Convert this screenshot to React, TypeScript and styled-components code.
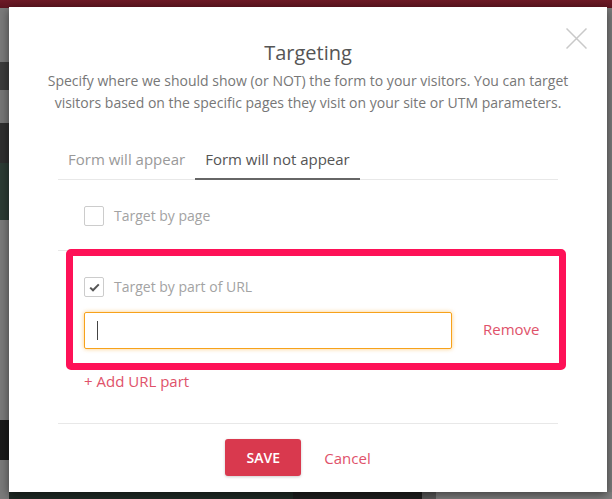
import React from "react";
import styled, { createGlobalStyle } from "styled-components";

const GlobalStyle = createGlobalStyle`
    body {
        margin: 0;
        font-family: "Open Sans", "Liberation Sans", sans-serif;
    }
`
const Page = styled.div`
    width: 612px;
    height: 499px;
    overflow: hidden;
    box-sizing: border-box;
    padding: 7px 5px 0 9px;
    background:
        linear-gradient(#6d1b27, #5e1520) 0 0 / 100% 8px no-repeat,
        linear-gradient(to bottom,
            #7a7a7a 0px, #7a7a7a 62px, #3c3c3c 62px, #3c3c3c 90px,
            #767676 90px, #767676 123px, #2e2e2e 123px, #2e2e2e 163px,
            #2c3b34 163px, #2c3b34 220px, #7a7a7a 220px, #7a7a7a 420px,
            #1b1b1b 420px, #1b1b1b 460px, #7a7a7a 460px) 0 0 / 9px 100% no-repeat,
        linear-gradient(to right,
            #1f2b26 0px, #1f2b26 293px, #1e1e1e 293px, #1e1e1e 422px,
            #5a5a5a 422px, #5a5a5a 436px, #808080 436px) 0 492px / 100% 7px no-repeat,
        #7b7b7b;
`
const Modal = styled.div`
    position: relative;
    width: 598px;
    height: 485px;
    background: #fff;
    box-shadow: 0 3px 9px rgba(0, 0, 0, 0.5);
    display: flex;
    flex-direction: column;
`
const CloseButton = styled.button`
    position: absolute;
    top: 21px;
    right: 20px;
    width: 21px;
    height: 21px;
    padding: 0;
    border: none;
    background: none;
    cursor: pointer;
    svg { display: block; }
`
const Header = styled.div`
    padding-top: 32px;
    text-align: center;
`
const Title = styled.h2`
    margin: 0;
    font-size: 20px;
    line-height: 28px;
    font-weight: 400;
    color: #555;
`
const Description = styled.p`
    margin: 3px 0 0;
    padding: 0 30px;
    font-size: 14px;
    line-height: 22px;
    color: #777;
`
const Body = styled.div`
    margin: 25px 49px 0;
`
const Tabs = styled.div`
    display: flex;
    border-bottom: 1px solid #e8e8e8;
`
const Tab = styled.div<{ $active?: boolean }>`
    padding: 10px 10px 9px;
    margin-bottom: -1px;
    font-size: 15px;
    line-height: 20px;
    color: ${p => p.$active ? "#555" : "#999"};
    border-bottom: 2px solid ${p => p.$active ? "#666" : "transparent"};
    cursor: pointer;
`
const Section = styled.div<{ $divided?: boolean }>`
    position: relative;
    padding: 26px 20px ${p => p.$divided ? "24px" : "0"} 26px;
    border-bottom: ${p => p.$divided ? "1px solid #e8e8e8" : "none"};
`
const CheckRow = styled.label`
    display: flex;
    align-items: center;
    font-size: 14px;
    line-height: 20px;
    color: #a3a3a3;
`
const Box = styled.span`
    width: 20px;
    height: 20px;
    box-sizing: border-box;
    border: 1px solid #ccc;
    border-radius: 2px;
    margin-right: 10px;
    display: flex;
    align-items: center;
    justify-content: center;
`
const FieldRow = styled.div`
    display: flex;
    align-items: center;
    margin-top: 15px;
`
const Field = styled.div`
    position: relative;
    flex: 0 0 368px;
    height: 37px;
    box-sizing: border-box;
    border: 1px solid #f7a21b;
    border-radius: 2px;
    box-shadow: 0 0 4px rgba(247, 162, 27, 0.55);
`
const Caret = styled.span`
    position: absolute;
    left: 12px;
    top: 8px;
    width: 1px;
    height: 19px;
    background: #444;
`
const LinkText = styled.a`
    font-size: 15px;
    line-height: 20px;
    color: #e0526a;
    text-decoration: none;
    cursor: pointer;
    white-space: nowrap;
`
const RemoveLink = styled(LinkText)`
    margin: -3px 0 0 31px;
`
const AddLink = styled(LinkText)`
    display: block;
    margin: 22px 0 0 26px;
`
const Highlight = styled.div`
    position: absolute;
    top: -2px;
    left: 8px;
    right: -8px;
    bottom: -21px;
    border: 7.5px solid #fe1157;
    border-radius: 5px;
    pointer-events: none;
`
const Footer = styled.div`
    margin-top: 32px;
    border-top: 1px solid #e8e8e8;
    padding: 15px 20px 0 0;
    display: flex;
    justify-content: center;
    align-items: center;
`
const SaveButton = styled.button`
    width: 76px;
    height: 37px;
    border: none;
    border-radius: 3px;
    background: #d9394e;
    color: #fff;
    font-family: inherit;
    font-size: 14px;
    font-weight: 600;
    box-shadow: 0 1px 3px rgba(0, 0, 0, 0.2);
    cursor: pointer;
`
const CancelLink = styled(LinkText)`
    margin-left: 23px;
`

const Check = () => (
    <svg width="11" height="9" viewBox="0 0 11 9">
        <path d="M1.2 4.6 L4 7.3 L9.8 1.4" fill="none" stroke="#555" strokeWidth="2" />
    </svg>
)

export default function App() {
    return (
        <Page>
            <GlobalStyle />
            <Modal>
                <CloseButton aria-label="Close">
                    <svg width="21" height="21" viewBox="0 0 21 21">
                        <path d="M0.5 0.5 L20.5 20.5 M20.5 0.5 L0.5 20.5" stroke="#c9c9c9" strokeWidth="1.5" />
                    </svg>
                </CloseButton>
                <Header>
                    <Title>Targeting</Title>
                    <Description>
                        Specify where we should show (or NOT) the form to your visitors. You can target visitors based on the specific pages they visit on your site or UTM parameters.
                    </Description>
                </Header>
                <Body>
                    <Tabs>
                        <Tab>Form will appear</Tab>
                        <Tab $active>Form will not appear</Tab>
                    </Tabs>
                    <Section $divided>
                        <CheckRow><Box />Target by page</CheckRow>
                    </Section>
                    <Section>
                        <CheckRow><Box><Check /></Box>Target by part of URL</CheckRow>
                        <FieldRow>
                            <Field><Caret /></Field>
                            <RemoveLink>Remove</RemoveLink>
                        </FieldRow>
                        <Highlight />
                    </Section>
                    <AddLink>+ Add URL part</AddLink>
                    <Footer>
                        <SaveButton>SAVE</SaveButton>
                        <CancelLink>Cancel</CancelLink>
                    </Footer>
                </Body>
            </Modal>
        </Page>
    )
}
